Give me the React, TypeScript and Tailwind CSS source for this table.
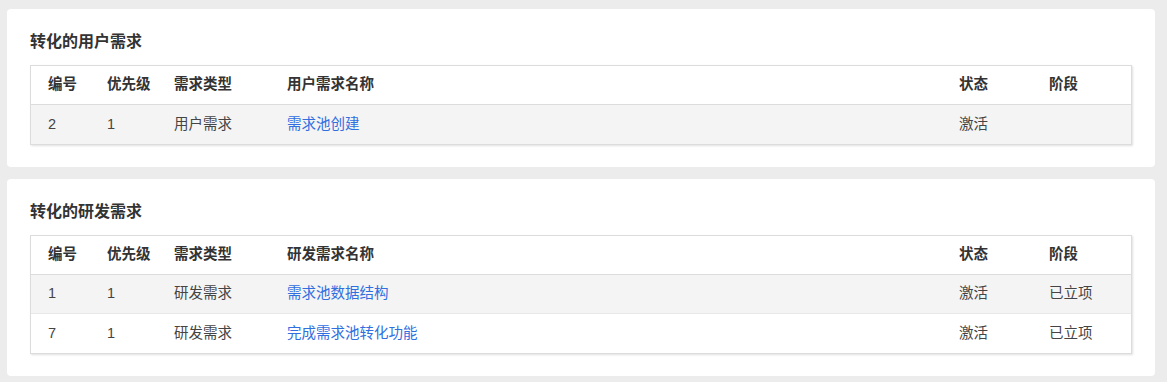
import React from "react";

type Row = {
  id: number;
  priority: number;
  type: string;
  name: string;
  status: string;
  stage: string;
};

const userReqs: Row[] = [
  { id: 2, priority: 1, type: "用户需求", name: "需求池创建", status: "激活", stage: "" },
];

const devReqs: Row[] = [
  { id: 1, priority: 1, type: "研发需求", name: "需求池数据结构", status: "激活", stage: "已立项" },
  { id: 7, priority: 1, type: "研发需求", name: "完成需求池转化功能", status: "激活", stage: "已立项" },
];

const cols = ["w-[59px]", "w-[67px]", "w-[113px]", "flex-1", "w-[90px]", "w-[99px]"];

function ReqTable({ nameLabel, rows }: { nameLabel: string; rows: Row[] }) {
  const head = ["编号", "优先级", "需求类型", nameLabel, "状态", "阶段"];
  return (
    <div className="border border-[#dcdcdc] shadow-[1px_1px_2px_rgba(0,0,0,0.12)] text-[14.5px]">
      <div className="flex h-[39px] items-center border-b border-[#dcdcdc] bg-white font-bold text-[#333]">
        {head.map((h, i) => (
          <div key={h} className={`${cols[i]} pl-[17px]`}>
            {h}
          </div>
        ))}
      </div>
      {rows.map((r, idx) => (
        <div
          key={r.id}
          className={`flex h-[39px] items-center text-[#444] ${
            idx % 2 === 0 ? "bg-[#f4f4f4]" : "bg-white"
          } ${idx < rows.length - 1 ? "border-b border-[#e8e8e8]" : ""}`}
        >
          <div className={`${cols[0]} pl-[17px]`}>{r.id}</div>
          <div className={`${cols[1]} pl-[17px]`}>{r.priority}</div>
          <div className={`${cols[2]} pl-[17px]`}>{r.type}</div>
          <div className={`${cols[3]} pl-[17px]`}>
            <a className="text-[#2f6fe0] cursor-pointer">{r.name}</a>
          </div>
          <div className={`${cols[4]} pl-[17px]`}>{r.status}</div>
          <div className={`${cols[5]} pl-[17px]`}>{r.stage}</div>
        </div>
      ))}
    </div>
  );
}

function Section({ title, nameLabel, rows }: { title: string; nameLabel: string; rows: Row[] }) {
  return (
    <div className="rounded-[4px] bg-white px-[23px] pt-[22px] pb-[22px]">
      <h3 className="mb-[12px] h-[22px] text-[16px] font-bold leading-[22px] text-[#333]">{title}</h3>
      <ReqTable nameLabel={nameLabel} rows={rows} />
    </div>
  );
}

export default function App() {
  return (
    <div
      className="min-h-[382px] bg-[#ececec] pt-[9px] pl-[7px] pr-[12px] pb-[6px] flex flex-col gap-[12px]"
      style={{ fontFamily: '"Liberation Sans", "Noto Sans CJK SC", sans-serif' }}
    >
      <Section title="转化的用户需求" nameLabel="用户需求名称" rows={userReqs} />
      <Section title="转化的研发需求" nameLabel="研发需求名称" rows={devReqs} />
    </div>
  );
}
